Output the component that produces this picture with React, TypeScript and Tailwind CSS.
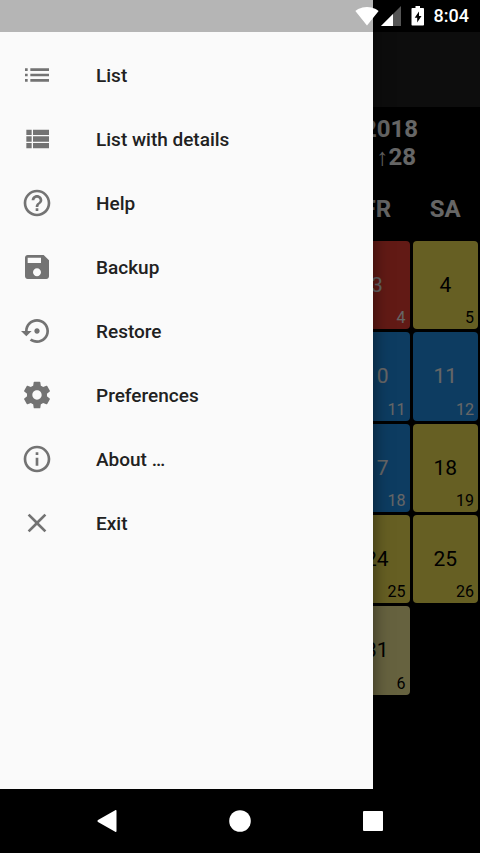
import React, { useState } from 'react';

interface MenuItem {
    label: string;
    icon: string;
}

interface Day {
    date: number;
    pill: number;
    column: string;
    color: string;
}

// 24x24 material paths
const MENU: MenuItem[] = [
    { label: 'List', icon: 'M3 9h2V7H3v2zm0 4h2v-2H3v2zm0 4h2v-2H3v2zm4 0h14v-2H7v2zm0-4h14v-2H7v2zm0-6v2h14V7H7z' },
    { label: 'List with details', icon: 'M4 14h4v-4H4v4zm0 5h4v-4H4v4zM4 9h4V5H4v4zm5 5h12v-4H9v4zm0 5h12v-4H9v4zM9 5v4h12V5H9z' },
    { label: 'Help', icon: 'M11 18h2v-2h-2v2zm1-16C6.48 2 2 6.48 2 12s4.48 10 10 10 10-4.48 10-10S17.52 2 12 2zm0 18c-4.41 0-8-3.59-8-8s3.59-8 8-8 8 3.59 8 8-3.59 8-8 8zm0-14c-2.21 0-4 1.79-4 4h2c0-1.1.9-2 2-2s2 .9 2 2c0 2-3 1.75-3 5h2c0-2.25 3-2.5 3-5 0-2.21-1.79-4-4-4z' },
    { label: 'Backup', icon: 'M17 3H5c-1.11 0-2 .9-2 2v14c0 1.1.89 2 2 2h14c1.1 0 2-.9 2-2V7l-4-4zm-5 16c-1.66 0-3-1.34-3-3s1.34-3 3-3 3 1.34 3 3-1.34 3-3 3zm3-10H5V5h10v4z' },
    { label: 'Restore', icon: 'M14 12c0-1.1-.9-2-2-2s-2 .9-2 2 .9 2 2 2 2-.9 2-2zm-2-9c-4.97 0-9 4.03-9 9H0l4 4 4-4H5c0-3.87 3.13-7 7-7s7 3.13 7 7-3.13 7-7 7c-1.51 0-2.91-.49-4.06-1.3l-1.42 1.44C8.04 20.3 9.94 21 12 21c4.97 0 9-4.03 9-9s-4.03-9-9-9z' },
    { label: 'Preferences', icon: 'M19.43 12.98c.04-.32.07-.64.07-.98s-.03-.66-.07-.98l2.11-1.65c.19-.15.24-.42.12-.64l-2-3.46c-.12-.22-.39-.3-.61-.22l-2.49 1c-.52-.4-1.08-.73-1.69-.98l-.38-2.65C14.46 2.18 14.25 2 14 2h-4c-.25 0-.46.18-.49.42l-.38 2.65c-.61.25-1.17.59-1.69.98l-2.49-1c-.23-.09-.49 0-.61.22l-2 3.46c-.13.22-.07.49.12.64l2.11 1.65c-.04.32-.07.65-.07.98s.03.66.07.98l-2.11 1.65c-.19.15-.24.42-.12.64l2 3.46c.12.22.39.3.61.22l2.49-1c.52.4 1.08.73 1.69.98l.38 2.65c.03.24.24.42.49.42h4c.25 0 .46-.18.49-.42l.38-2.65c.61-.25 1.17-.59 1.69-.98l2.49 1c.23.09.49 0 .61-.22l2-3.46c.12-.22.07-.49-.12-.64l-2.11-1.65zM12 15.5c-1.93 0-3.5-1.57-3.5-3.5s1.57-3.5 3.5-3.5 3.5 1.57 3.5 3.5-1.57 3.5-3.5 3.5z' },
    { label: 'About …', icon: 'M11 17h2v-6h-2v6zm1-15C6.48 2 2 6.48 2 12s4.48 10 10 10 10-4.48 10-10S17.52 2 12 2zm0 18c-4.41 0-8-3.59-8-8s3.59-8 8-8 8 3.59 8 8-3.59 8-8 8zM11 9h2V7h-2v2z' },
    { label: 'Exit', icon: 'M19 6.41L17.59 5 12 10.59 6.41 5 5 6.41 10.59 12 5 17.59 6.41 19 12 13.41 17.59 19 19 17.59 13.41 12z' },
];

const RED = 'bg-[#f44336] text-white';
const BLUE = 'bg-[#2196f3] text-white';
const YELLOW = 'bg-[#ffee58] text-black';
const PALE = 'bg-[#fff59d] text-black';

const DAYS: Day[] = [
    { date: 3, pill: 4, column: 'col-start-6', color: RED },
    { date: 4, pill: 5, column: 'col-start-7', color: YELLOW },
    { date: 10, pill: 11, column: 'col-start-6', color: BLUE },
    { date: 11, pill: 12, column: 'col-start-7', color: BLUE },
    { date: 17, pill: 18, column: 'col-start-6', color: BLUE },
    { date: 18, pill: 19, column: 'col-start-7', color: YELLOW },
    { date: 24, pill: 25, column: 'col-start-6', color: YELLOW },
    { date: 25, pill: 26, column: 'col-start-7', color: YELLOW },
    { date: 31, pill: 6, column: 'col-start-6', color: PALE },
];

function StatusBar() {
    return (
        <header className="relative z-20 flex h-8 items-center justify-end pr-[11px] text-white">
            <svg className="h-6 w-6" viewBox="0 0 24 24" fill="currentColor">
                <path d="M12.01 21.49L23.64 7c-.45-.34-4.93-4-11.64-4C5.28 3 .81 6.66.36 7l11.63 14.49.01.01.01-.01z" />
            </svg>
            <svg className="ml-0.5 h-5 w-5" viewBox="0 0 20 20" fill="currentColor">
                <path d="M20 0v20H0z" fill="#555" />
                <path d="M12 8v12H0z" />
            </svg>
            <svg className="ml-[10px] h-5 w-[14px]" viewBox="0 0 14 20" fill="currentColor">
                <path fillRule="evenodd" d="M4.500 0h4.500v2h3.200c.5 0 .8.300.8.800v15.900c0 .5-.3.800-.8.800H1.300c-.5 0-.8-.3-.8-.8V2.800c0-.5.3-.8.800-.8h3.200zM8 5.500l-4.300 6.300h2.500v4.700l4.300-6.500H8z" />
            </svg>
            <span className="ml-[9px] text-lg leading-6 font-medium">8:04</span>
        </header>
    );
}

function Calendar() {
    return (
        <main className="flex flex-1 flex-col">
            <div className="h-[75px] bg-[#212121]" />
            <div className="pt-2 pr-[62px] text-right text-2xl leading-7 font-bold text-white">
                <p>2018</p>
                <p className="pr-0.5"><span className="font-normal">↑</span>28</p>
            </div>
            <div className="mt-6 mb-[18px] grid grid-cols-7 gap-[3px] px-0.5 text-center text-2xl leading-7 font-bold text-white">
                <span className="col-start-6">FR</span>
                <span className="col-start-7">SA</span>
            </div>
            <div className="grid flex-1 grid-cols-7 grid-rows-6 gap-[3px] px-0.5 pb-[3px]">
                {DAYS.map(day => (
                    <div key={day.date} className={`relative flex items-center justify-center rounded ${day.column} ${day.color}`}>
                        <span className="text-[21px] leading-6">{day.date}</span>
                        <span className="absolute right-1 bottom-px text-base leading-5">{day.pill}</span>
                    </div>
                ))}
            </div>
        </main>
    );
}

export default function App() {
    const [selected, setSelected] = useState<string | null>(null);

    return (
        <div className="flex min-h-screen flex-col bg-black font-[Roboto,sans-serif]">
            <div className="relative flex flex-1 flex-col">
                <StatusBar />
                <Calendar />

                {/* scrim */}
                <div className="absolute inset-0 bg-black/60" />

                {/* drawer */}
                <aside className="absolute inset-y-0 left-0 z-10 w-[373px] bg-[#fafafa] shadow-[0_0_16px_rgba(0,0,0,0.5)]">
                    <div className="h-8 bg-[#b5b5b5]" />
                    <ul className="pt-[11px]">
                        {MENU.map(item => (
                            <li key={item.label}>
                                <button
                                    onClick={() => setSelected(item.label)}
                                    aria-pressed={selected === item.label}
                                    className="flex h-16 w-full items-center gap-[43px] pl-[21px] text-left active:bg-black/10"
                                >
                                    <svg className="h-8 w-8 shrink-0 text-[#737373]" viewBox="0 0 24 24" fill="currentColor">
                                        <path d={item.icon} />
                                    </svg>
                                    <span className="pt-0.5 text-[19px] leading-6 font-medium text-[#212121]">{item.label}</span>
                                </button>
                            </li>
                        ))}
                    </ul>
                </aside>
            </div>

            <nav className="grid h-16 grid-cols-3 px-10 text-white">
                <button aria-label="Back" className="flex items-center justify-center">
                    <svg className="h-6 w-6" viewBox="0 0 24 24" fill="currentColor">
                        <path d="M21.500 1.800v20.400c0 .8-.7 1-1.300.6L3 13c-.7-.4-.7-1.600 0-2L20.200 1.200c.6-.4 1.300-.2 1.300.6z" />
                    </svg>
                </button>
                <button aria-label="Home" className="flex items-center justify-center">
                    <svg className="h-6 w-6" viewBox="0 0 24 24" fill="currentColor">
                        <circle cx="12" cy="12" r="10.800" />
                    </svg>
                </button>
                <button aria-label="Overview" className="flex items-center justify-center">
                    <svg className="h-6 w-6" viewBox="0 0 24 24" fill="currentColor">
                        <rect x="2" y="2" width="20" height="20" rx="1" />
                    </svg>
                </button>
            </nav>
        </div>
    );
}
